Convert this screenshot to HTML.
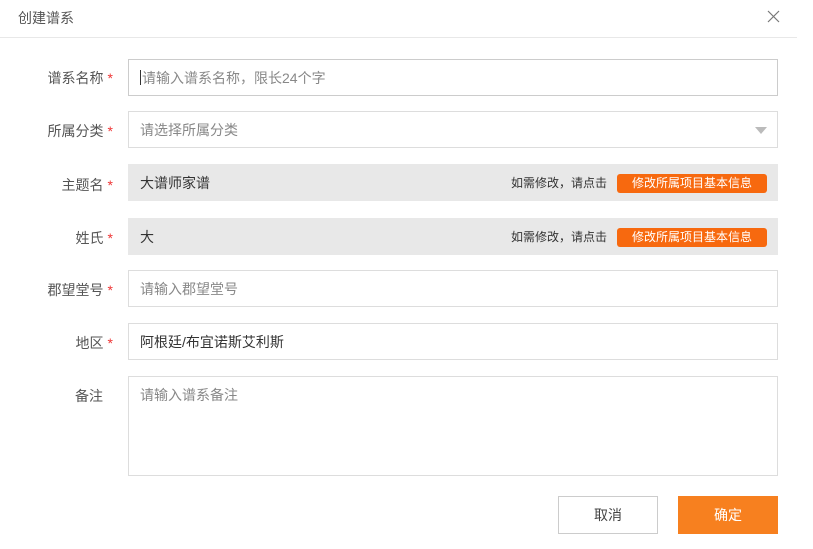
<!DOCTYPE html><html><head><meta charset="utf-8"><style>
body{margin:0;width:813px;height:549px;background:#fff;font-family:"Liberation Sans","Noto Sans CJK SC",sans-serif;font-size:14px;color:#444;position:relative;overflow:hidden}
.a{position:absolute}
.t{top:8px;left:18px;color:#555}
.hl{top:37px;left:0;width:797px;height:1px;background:#e8e8e8}
.lab{right:700px;color:#555;text-align:right;white-space:nowrap}
.lab b{color:#e33;font-weight:normal;margin-left:4px}
.in{left:128px;width:650px;border:1px solid #ddd;box-sizing:border-box;padding-left:11px;display:flex;align-items:center;color:#888}
.g{background:#e8e8e8;border-color:#e8e8e8;color:#333}
.btn{position:absolute;left:488px;top:9px;width:150px;height:19px;background:#f7690f;color:#fff;font-size:12px;border-radius:3px;text-align:center;line-height:19px}
.hint{position:absolute;left:382px;font-size:12px;color:#333}
</style></head><body>
<div class="a t">创建谱系</div>
<svg class="a" style="left:767px;top:10px" width="13" height="13" viewBox="0 0 13 13"><path d="M1 1L12 12M12 1L1 12" stroke="#777" stroke-width="1.2" fill="none"/></svg>
<div class="a hl"></div>
<div class="a lab" style="top:68px">谱系名称<b>*</b></div>
<div class="a in" style="top:59px;height:37px;border-color:#ccc"><span style="border-left:1px solid #333;height:15px;margin-right:1px"></span>请输入谱系名称，限长24个字</div>
<div class="a lab" style="top:121px">所属分类<b>*</b></div>
<div class="a in" style="top:111px;height:37px">请选择所属分类<span style="position:absolute;right:10px;top:15px;border:6px solid transparent;border-top:7px solid #bbb;border-bottom:0"></span></div>
<div class="a lab" style="top:175px">主题名<b>*</b></div>
<div class="a in g" style="top:164px;height:37px">大谱师家谱<span class="hint">如需修改，请点击</span><span class="btn">修改所属项目基本信息</span></div>
<div class="a lab" style="top:228px">姓氏<b>*</b></div>
<div class="a in g" style="top:218px;height:37px">大<span class="hint">如需修改，请点击</span><span class="btn">修改所属项目基本信息</span></div>
<div class="a lab" style="top:280px">郡望堂号<b>*</b></div>
<div class="a in" style="top:270px;height:37px">请输入郡望堂号</div>
<div class="a lab" style="top:333px">地区<b>*</b></div>
<div class="a in" style="top:323px;height:37px;color:#333">阿根廷/布宜诺斯艾利斯</div>
<div class="a lab" style="top:386px;right:710px">备注</div>
<div class="a in" style="top:376px;height:100px;align-items:flex-start;padding-top:8px">请输入谱系备注</div>
<div class="a" style="left:558px;top:496px;width:100px;height:38px;border:1px solid #ccc;box-sizing:border-box;text-align:center;line-height:36px">取消</div>
<div class="a" style="left:678px;top:496px;width:100px;height:38px;background:#f7801f;color:#fff;text-align:center;line-height:38px">确定</div>
</body></html>
